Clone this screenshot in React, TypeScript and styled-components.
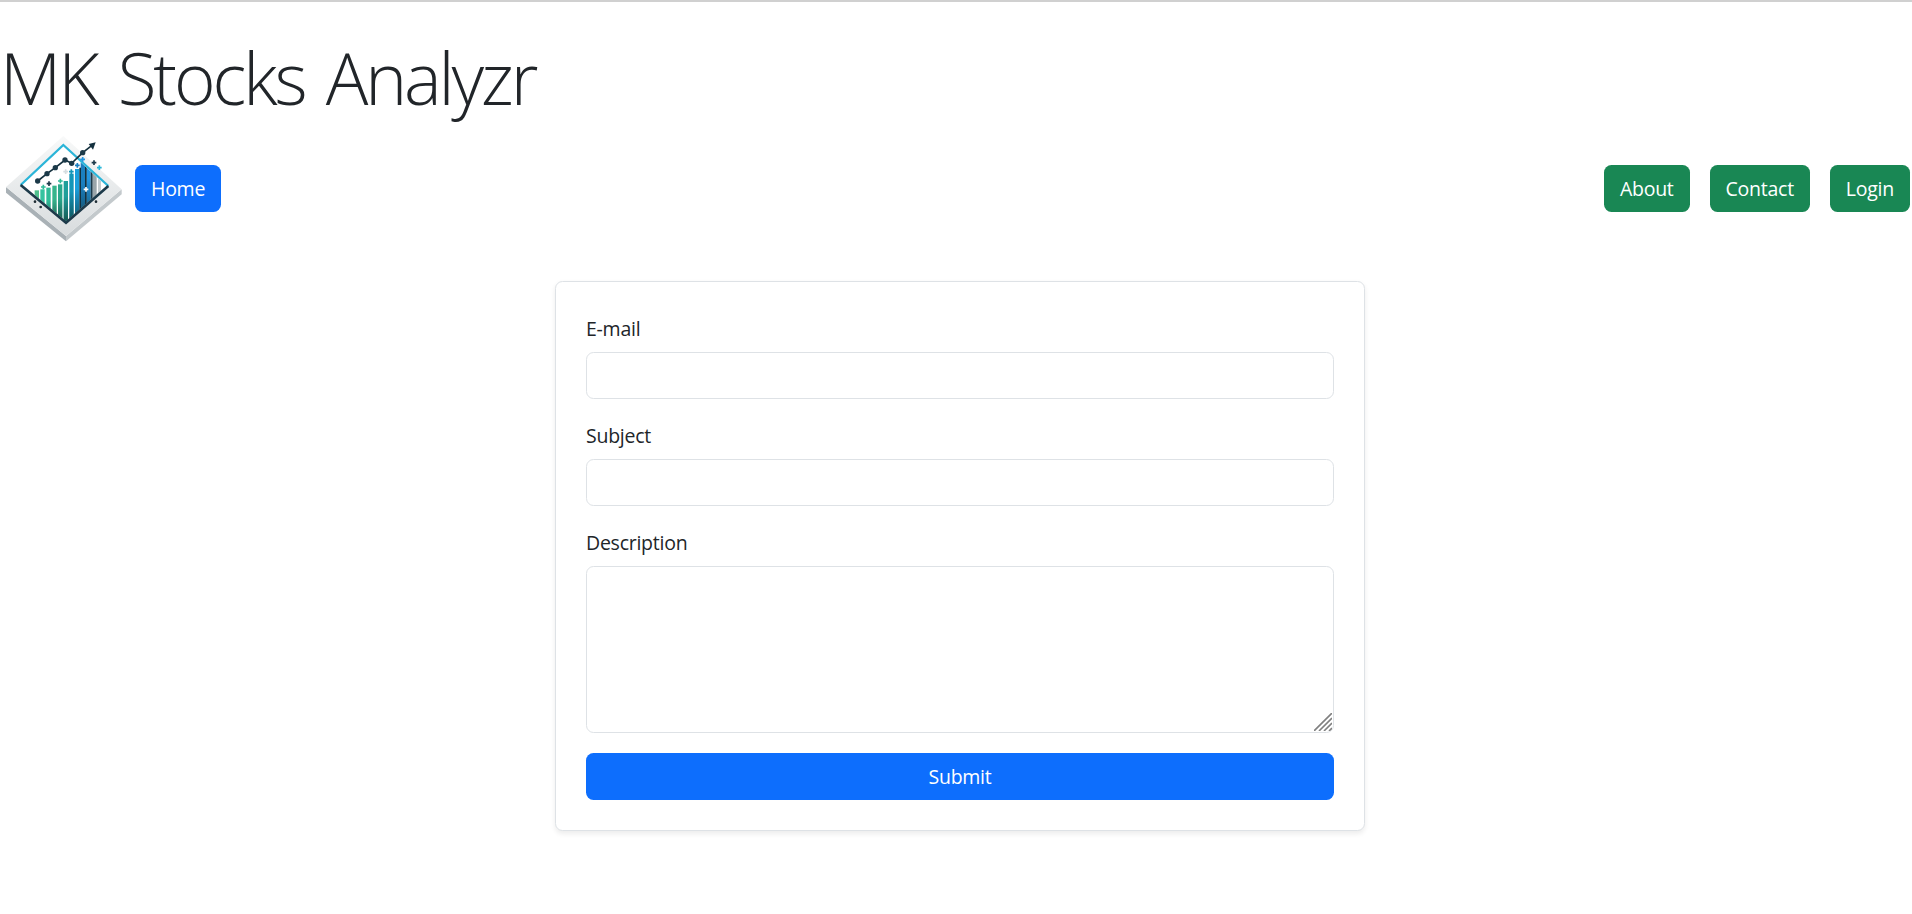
import * as React from 'react';
import styled, {createGlobalStyle} from 'styled-components';

const GlobalStyle = createGlobalStyle`
    * {
        box-sizing: border-box;
    }
    body {
        margin: 0;
        background: #fff;
        color: #212529;
        font-family: "Open Sans", "Noto Sans", sans-serif;
        font-size: 20px;
        line-height: 1.5;
    }
`;

const Page = styled.div`
    display: flex;
    flex-direction: column;
    min-height: 914px;
    border-top: 2px solid #d0d0d0;
`;

const Title = styled.h1`
    margin: 0;
    padding: 34px 0 0 0;
    height: 129px;
    font-size: 71px;
    font-weight: 300;
    line-height: 84px;
    letter-spacing: -3.1px;
    word-spacing: 6px;
    white-space: nowrap;
`;

const Nav = styled.nav`
    display: flex;
    align-items: center;
    height: 115px;
`;

const Logo = styled.svg`
    flex: none;
    width: 130px;
    height: 115px;
    margin-right: 5px;
`;

const Spacer = styled.div`
    flex: 1;
`;

const RightLinks = styled.div`
    display: flex;
    gap: 20px;
    padding-right: 2px;
`;

const Button = styled.button<{$variant: 'primary' | 'success'; $block?: boolean}>`
    display: block;
    width: ${({$block}) => ($block ? '100%' : 'auto')};
    height: 47px;
    padding: 0 16px;
    border: 0;
    border-radius: 7.5px;
    background: ${({$variant}) => ($variant === 'primary' ? '#0d6efd' : '#198754')};
    color: #fff;
    font-family: inherit;
    font-size: 19.5px;
    letter-spacing: -0.25px;
    line-height: 30px;
`;

const Main = styled.main`
    display: flex;
    justify-content: center;
    margin-top: 35px;
    padding-left: 8px;
`;

const Card = styled.form`
    width: 810px;
    padding: 30px;
    border: 1px solid #dee2e6;
    border-radius: 7.5px;
    background: #fff;
    box-shadow: 0 2.5px 5px rgba(0, 0, 0, 0.075);
`;

const Field = styled.div`
    margin-bottom: 20px;
`;

const Label = styled.label`
    display: block;
    margin-bottom: 6px;
    font-size: 19.5px;
    letter-spacing: -0.25px;
    line-height: 34px;
`;

const TextInput = styled.input`
    display: block;
    width: 100%;
    height: 47px;
    border: 1px solid #dee2e6;
    border-radius: 7.5px;
    background: #fff;
    outline: none;
`;

const AreaWrap = styled.div`
    position: relative;
    height: 167px;
`;

const TextArea = styled.textarea`
    display: block;
    width: 100%;
    height: 100%;
    border: 1px solid #dee2e6;
    border-radius: 7.5px;
    background: #fff;
    outline: none;
    resize: none;
`;

const Grip = styled.svg`
    position: absolute;
    right: 2px;
    bottom: 2px;
    width: 18px;
    height: 18px;
    pointer-events: none;
`;

const bars = [
    {x: 110, top: 178, color: '#4fc08d'},
    {x: 127, top: 175, color: '#35c3a0'},
    {x: 145, top: 170, color: '#2fbb98'},
    {x: 163, top: 164, color: '#36b58c'},
    {x: 180, top: 160, color: '#29a98c'},
    {x: 197, top: 150, color: '#1f9f9a'},
    {x: 214, top: 128, color: '#1496b8'},
    {x: 231, top: 114, color: '#1a9fdc'},
    {x: 248, top: 94, color: '#1b7fc0'},
    {x: 265, top: 68, color: '#2496e0'},
];

const trend = [
    [113, 150],
    [141, 128],
    [166, 110],
    [195, 87],
    [215, 97],
    [248, 65],
];

const sparks = [
    [147, 158, '#1d3a4a'],
    [130, 168, '#2fbb98'],
    [181, 150, '#2fbb98'],
    [214, 122, '#1496b8'],
    [232, 103, '#1b7fc0'],
    [248, 85, '#2496e0'],
    [197, 122, '#d5dde0'],
    [258, 175, '#ffffff'],
    [282, 95, '#1d3a4a'],
    [298, 110, '#29b6d8'],
];

const StocksLogo: React.FC = () => (
    <Logo viewBox="0 0 390 345">
        <defs>
            <linearGradient id="plate" x1="0" y1="0" x2="0" y2="1">
                <stop offset="0" stopColor="#f8f9f9" />
                <stop offset="1" stopColor="#d8dcde" />
            </linearGradient>
            <linearGradient id="fade" x1="0" y1="0" x2="0" y2="1">
                <stop offset="0.35" stopColor="#0f2c3a" stopOpacity="0" />
                <stop offset="1" stopColor="#0f3a2a" stopOpacity="0.75" />
            </linearGradient>
            <clipPath id="inner">
                <polygon points="190,46 68,162 198,271 319,165" />
            </clipPath>
        </defs>
        <polygon points="18,168 18,185 198,331 198,315" fill="#a9b1b6" />
        <polygon points="198,331 365,190 365,175 198,315" fill="#c3c9cc" />
        <polygon points="190,15 18,168 198,315 365,175" fill="url(#plate)" />
        <polygon points="190,42 62,162 198,275 325,165" fill="#fff" />
        <g clipPath="url(#inner)">
            {bars.map(({x, top, color}) => (
                <g key={x}>
                    <rect x={x - 6} y={top} width={13} height={280 - top} fill={color} />
                    <rect x={x - 6} y={top} width={13} height={280 - top} fill="url(#fade)" />
                </g>
            ))}
            <rect x="238" y="110" width="5" height="170" fill="#12303f" />
            <rect x="255" y="90" width="5" height="190" fill="#12303f" />
            <rect x="272" y="120" width="6" height="160" fill="#1d3a4a" />
            <rect x="279" y="108" width="11" height="130" fill="#9aa5aa" />
            <rect x="294" y="125" width="9" height="70" fill="#c4cbce" />
        </g>
        <polyline points="62,162 190,42 325,165" fill="none" stroke="#2bb5d8" strokeWidth="7" />
        <polyline points="62,162 198,275 325,165" fill="none" stroke="#1d3a4a" strokeWidth="8" />
        <polyline points={trend.map(p => p.join(',')).join(' ')} fill="none" stroke="#14303e" strokeWidth="5" />
        <line x1="248" y1="65" x2="275" y2="44" stroke="#14303e" strokeWidth="5" />
        <polygon points="287,34 266,39 279,56" fill="#14303e" />
        {trend.map(([x, y]) => (
            <circle key={x} cx={x} cy={y} r="8" fill="#1c3a49" />
        ))}
        {sparks.map(([x, y, color]) => (
            <path key={`${x}-${y}`} d={`M${Number(x) - 7} ${y}h14M${x} ${Number(y) - 7}v14`} stroke={String(color)} strokeWidth="5" />
        ))}
        <circle cx="105" cy="212" r="4" fill="#1d2b33" />
        <circle cx="122" cy="228" r="4" fill="#1d2b33" />
        <circle cx="288" cy="212" r="4" fill="#1d2b33" />
    </Logo>
);

const App: React.FC = () => {
    return (
        <Page>
            <GlobalStyle />
            <Title>MK Stocks Analyzr</Title>
            <Nav>
                <StocksLogo />
                <Button type="button" $variant="primary">Home</Button>
                <Spacer />
                <RightLinks>
                    <Button type="button" $variant="success">About</Button>
                    <Button type="button" $variant="success">Contact</Button>
                    <Button type="button" $variant="success">Login</Button>
                </RightLinks>
            </Nav>
            <Main>
                <Card onSubmit={e => e.preventDefault()}>
                    <Field>
                        <Label htmlFor="email">E-mail</Label>
                        <TextInput id="email" type="email" />
                    </Field>
                    <Field>
                        <Label htmlFor="subject">Subject</Label>
                        <TextInput id="subject" type="text" />
                    </Field>
                    <Field>
                        <Label htmlFor="description">Description</Label>
                        <AreaWrap>
                            <TextArea id="description" />
                            <Grip viewBox="0 0 18 18">
                                <path d="M0 18L18 0M5 18L18 5M10 18L18 10M15 18L18 15" stroke="#808080" strokeWidth="1.6" />
                            </Grip>
                        </AreaWrap>
                    </Field>
                    <Button type="submit" $variant="primary" $block>Submit</Button>
                </Card>
            </Main>
        </Page>
    );
};

export default App;
